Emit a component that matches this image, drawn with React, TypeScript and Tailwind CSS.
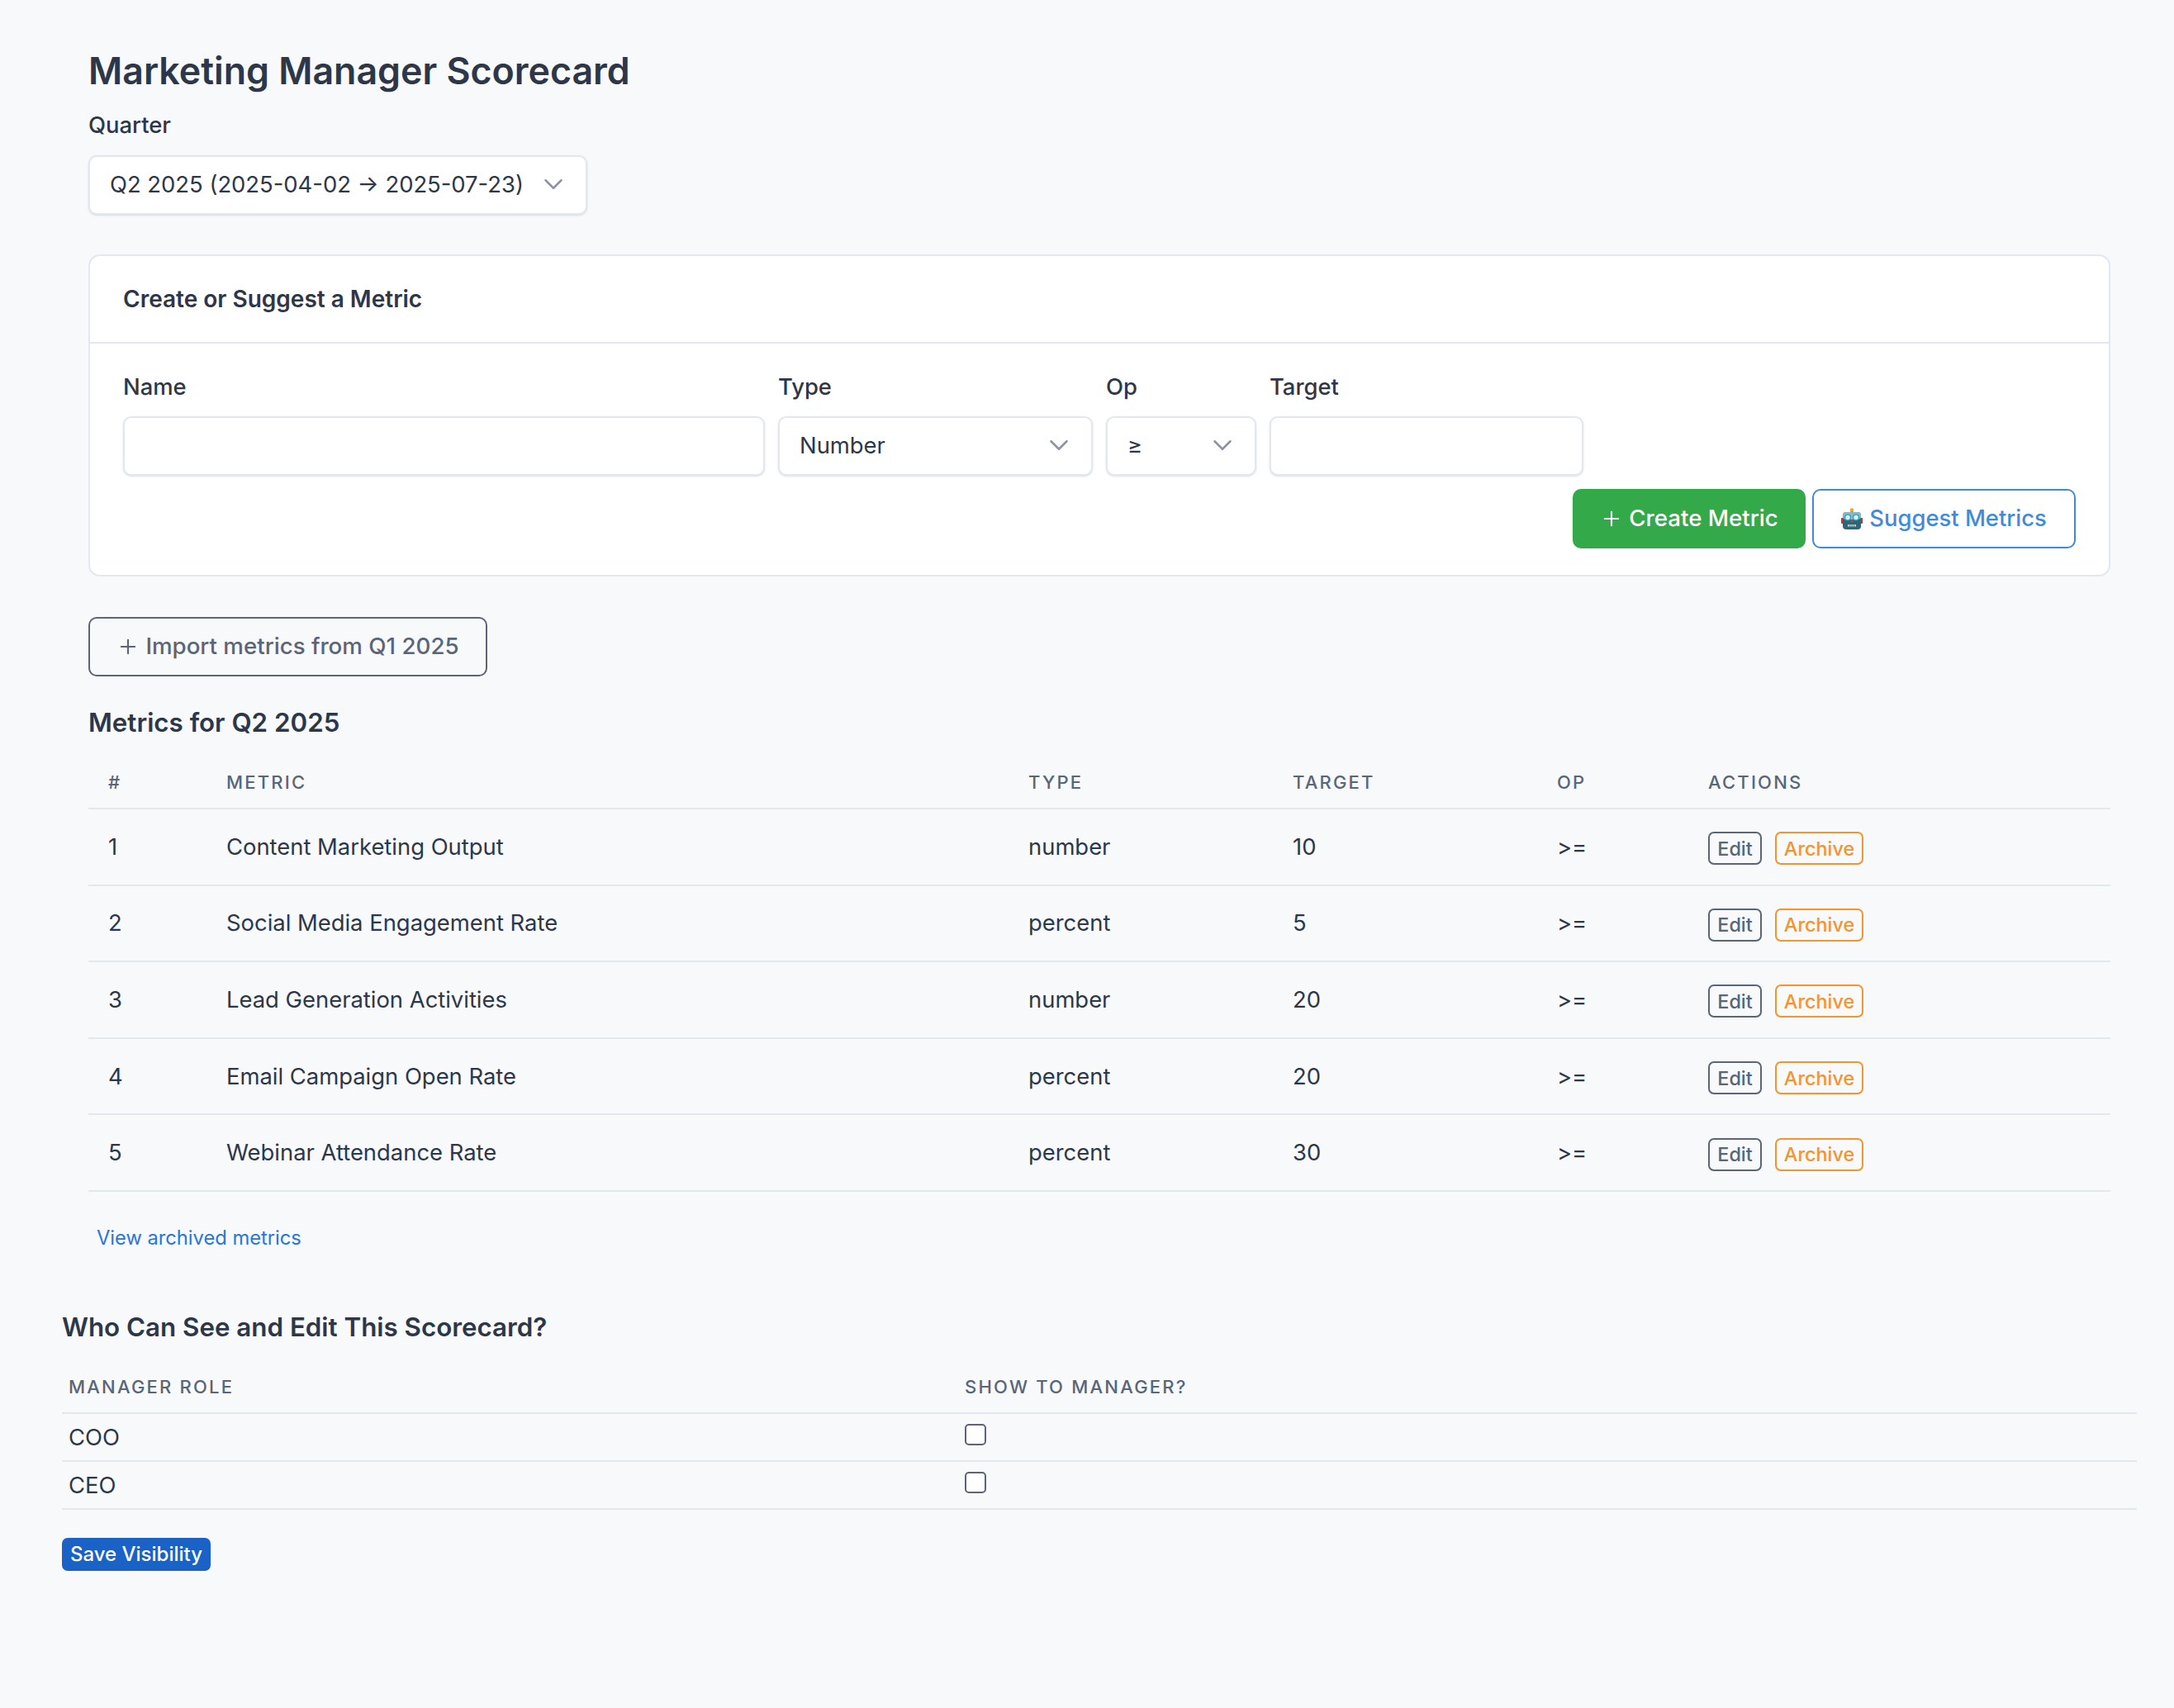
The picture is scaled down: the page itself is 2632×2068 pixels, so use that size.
import { ChevronDown, Plus } from 'lucide-react';

const metrics = [
  { name: 'Content Marketing Output', type: 'number', target: '10' },
  { name: 'Social Media Engagement Rate', type: 'percent', target: '5' },
  { name: 'Lead Generation Activities', type: 'number', target: '20' },
  { name: 'Email Campaign Open Rate', type: 'percent', target: '20' },
  { name: 'Webinar Attendance Rate', type: 'percent', target: '30' },
];

function RobotIcon() {
  return (
    <svg viewBox="0 0 26 26" className="w-[26px] h-[26px] shrink-0" aria-hidden="true">
      <rect x="11.5" y="2" width="3" height="3" fill="#6b7f8c" />
      <circle cx="13" cy="2.4" r="2.2" fill="#f5a623" />
      <rect x="0" y="12" width="3" height="7" rx="1" fill="#c4322b" />
      <rect x="23" y="12" width="3" height="7" rx="1" fill="#c4322b" />
      <rect x="2" y="5" width="22" height="21" rx="4" fill="#2f6673" />
      <rect x="2" y="5" width="22" height="9" rx="4" fill="#8fb7c2" />
      <circle cx="8" cy="11.5" r="3.4" fill="#dff6fb" stroke="#1aa7d8" strokeWidth="1.4" />
      <circle cx="18" cy="11.5" r="3.4" fill="#dff6fb" stroke="#1aa7d8" strokeWidth="1.4" />
      <path d="M13 13.5l2 3.5h-4z" fill="#d8413a" />
      <rect x="8" y="20" width="10" height="2.6" rx="0.6" fill="#dbe6ea" />
      <path d="M10 20v2.6M12 20v2.6M14 20v2.6M16 20v2.6" stroke="#2f4750" strokeWidth="0.7" />
    </svg>
  );
}

function SelectBox({ value, className }: { value: string; className: string }) {
  return (
    <div className={`relative ${className}`}>
      <select className="w-full h-[72px] appearance-none rounded-[10px] border-2 border-[#e2e8f0] bg-white pl-[24px] text-[27.4px] text-[#2d3748] shadow-sm outline-none">
        <option>{value}</option>
      </select>
      <ChevronDown className="absolute top-[16px] right-[22px] w-[38px] h-[38px] text-[#8a94a6] pointer-events-none" strokeWidth={1.6} />
    </div>
  );
}

function Field({ label, className, children }: { label: string; className: string; children: React.ReactNode }) {
  return (
    <div className={className}>
      <label className="block h-[36px] mb-[18px] text-[27.4px] leading-[36px] font-medium text-[#2d3748]">{label}</label>
      {children}
    </div>
  );
}

export default function App() {
  return (
    <div className="min-h-[2068px] bg-[#f7f9fb] font-['Inter',sans-serif] text-[#2d3748]">
      <div className="pl-[107px] pr-[77px] pt-[54px]">
        <h1 className="text-[44.7px] leading-[64px] font-semibold">Marketing Manager Scorecard</h1>
        <label className="block mt-[15px] text-[27.4px] leading-[36px] font-medium">Quarter</label>
        <SelectBox value="Q2 2025 (2025-04-02 → 2025-07-23)" className="w-[604px] mt-[19px]" />

        <div className="mt-[48px] rounded-[14px] border-2 border-[#e2e8f0] bg-white">
          <div className="h-[106px] border-b-2 border-[#e2e8f0] px-[40px] flex items-center">
            <h2 className="text-[28px] font-semibold">Create or Suggest a Metric</h2>
          </div>
          <div className="px-[40px] pt-[34px] pb-[32px]">
            <div className="flex gap-[16px]">
              <Field label="Name" className="w-[777px]">
                <input className="w-full h-[72px] rounded-[10px] border-2 border-[#e2e8f0] bg-white shadow-sm outline-none" />
              </Field>
              <Field label="Type" className="w-[381px]">
                <SelectBox value="Number" className="w-full" />
              </Field>
              <Field label="Op" className="w-[182px]">
                <SelectBox value="≥" className="w-full" />
              </Field>
              <Field label="Target" className="w-[380px]">
                <input className="w-full h-[72px] rounded-[10px] border-2 border-[#e2e8f0] bg-white shadow-sm outline-none" />
              </Field>
            </div>
            <div className="mt-[16px] flex justify-end gap-[8px]">
              <button className="h-[72px] w-[282px] rounded-[10px] bg-[#34a94a] text-[27.7px] font-medium text-white flex items-center justify-center gap-[7px]">
                <Plus className="w-[28px] h-[28px]" strokeWidth={1.8} />
                Create Metric
              </button>
              <button className="h-[72px] w-[319px] rounded-[10px] border-2 border-[#3f8bd8] bg-white text-[27.4px] font-medium text-[#3f8bd8] flex items-center justify-center gap-[8px]">
                <RobotIcon />
                Suggest Metrics
              </button>
            </div>
          </div>
        </div>

        <button className="mt-[49px] h-[72px] w-[483px] rounded-[10px] border-2 border-[#5a6577] text-[27.7px] font-medium text-[#5a6577] flex items-center justify-center gap-[7px]">
          <Plus className="w-[28px] h-[28px]" strokeWidth={1.8} />
          Import metrics from Q1 2025
        </button>

        <h2 className="mt-[34px] text-[31.3px] leading-[44px] font-semibold">Metrics for Q2 2025</h2>

        <table className="mt-[20px] w-full table-fixed border-collapse">
          <colgroup>
            <col className="w-[143px]" />
            <col className="w-[971px]" />
            <col className="w-[320px]" />
            <col className="w-[320px]" />
            <col className="w-[183px]" />
            <col />
          </colgroup>
          <thead>
            <tr className="h-[62px] border-b-2 border-[#e2e8f0] text-left text-[22px] tracking-[0.1em] text-[#5a6577]">
              <th className="pl-[24px] font-medium">#</th>
              <th className="pl-[24px] font-medium">METRIC</th>
              <th className="pl-[24px] font-medium">TYPE</th>
              <th className="pl-[24px] font-medium">TARGET</th>
              <th className="pl-[24px] font-medium">OP</th>
              <th className="pl-[24px] font-medium">ACTIONS</th>
            </tr>
          </thead>
          <tbody>
            {metrics.map((m, i) => (
              <tr key={m.name} className="h-[92.6px] border-b-2 border-[#e2e8f0] text-[27.4px]">
                <td className="pl-[24px]">{i + 1}</td>
                <td className="pl-[24px]">{m.name}</td>
                <td className="pl-[24px]">{m.type}</td>
                <td className="pl-[24px]">{m.target}</td>
                <td className="pl-[24px]">&gt;=</td>
                <td className="pl-[24px]">
                  <div className="flex gap-[16px] pt-[4px]">
                    <button className="h-[40px] w-[65px] rounded-[7px] border-2 border-[#5a6577] text-[23.4px] font-medium text-[#5a6577]">
                      Edit
                    </button>
                    <button className="h-[40px] w-[107px] rounded-[7px] border-2 border-[#f6932a] text-[23.4px] font-medium text-[#f6932a]">
                      Archive
                    </button>
                  </div>
                </td>
              </tr>
            ))}
          </tbody>
        </table>

        <a className="block mt-[40px] ml-[10px] text-[23.7px] leading-[32px] text-[#2a76d8]">View archived metrics</a>
      </div>

      <div className="pl-[75px] pr-[45px] mt-[70px]">
        <h2 className="text-[31.3px] leading-[44px] font-semibold">Who Can See and Edit This Scorecard?</h2>
        <table className="mt-[20px] w-full table-fixed border-collapse">
          <colgroup>
            <col className="w-[1085px]" />
            <col />
          </colgroup>
          <thead>
            <tr className="h-[62px] border-b-2 border-[#e2e8f0] text-left text-[22px] tracking-[0.1em] text-[#5a6577]">
              <th className="pl-[8px] font-medium">MANAGER ROLE</th>
              <th className="pl-[8px] font-medium">SHOW TO MANAGER?</th>
            </tr>
          </thead>
          <tbody>
            {['COO', 'CEO'].map((role) => (
              <tr key={role} className="h-[58px] border-b-2 border-[#e2e8f0] text-[27.4px]">
                <td className="pl-[8px] pt-[2px]">{role}</td>
                <td className="pl-[8px]">
                  <input
                    type="checkbox"
                    className="block appearance-none w-[26px] h-[26px] rounded-[5px] border-2 border-[#5a6577] bg-white -mt-[5px]"
                  />
                </td>
              </tr>
            ))}
          </tbody>
        </table>
        <button className="mt-[34px] h-[40px] w-[180px] rounded-[7px] bg-[#1a62c5] text-[24px] font-medium text-white">
          Save Visibility
        </button>
      </div>
    </div>
  );
}
